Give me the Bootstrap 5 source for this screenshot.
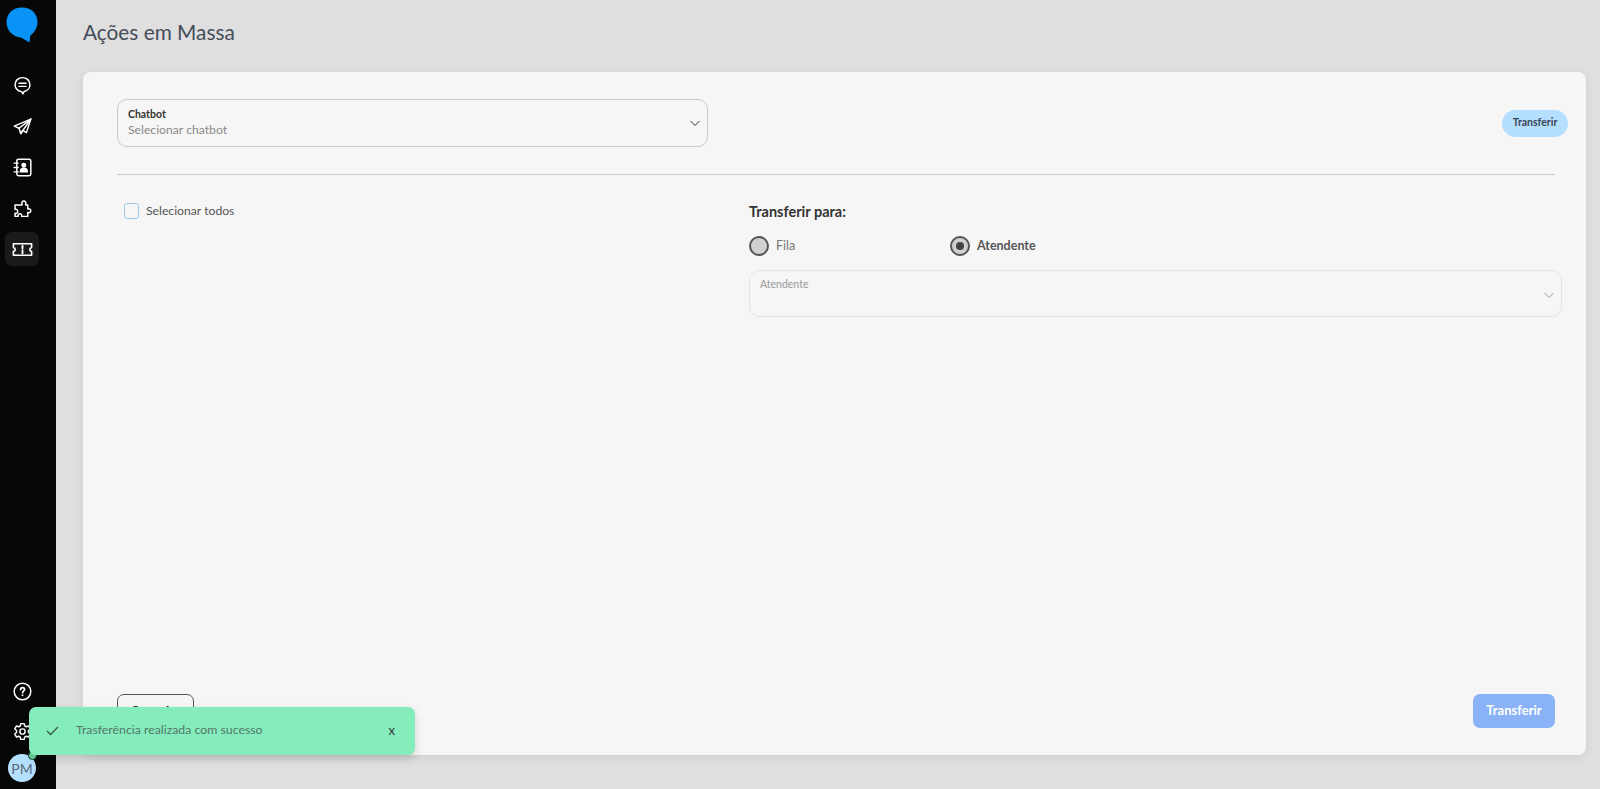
<!DOCTYPE html>
<html lang="pt-BR"><head><meta charset="utf-8"><title>Ações em Massa</title>
<link href="https://cdn.jsdelivr.net/npm/bootstrap@5.3.0/dist/css/bootstrap.min.css" rel="stylesheet">
<style>
html,body{height:100%;overflow:hidden}
body{font-family:"Lato","Noto Sans",sans-serif;background:#dfdfdf;color:#333}
.side-rail{width:56px;background:#070707;height:789px;padding:7px 12px 0 0;position:relative;z-index:1}
.rail-logo{width:32px;height:36px;margin-bottom:25px}
.rail-btn{width:34px;height:34px;margin-bottom:7px;border-radius:7px}
.rail-btn.on{background:#1a1a1a}
.rail-btn svg{width:21px;height:21px;fill:none;stroke:#fff;stroke-width:1.7;stroke-linejoin:round;stroke-linecap:round}
.rail-btn.on svg{width:23px;height:23px}
.rail-low{margin-top:auto;padding-bottom:7px}
.rail-low .rail-btn{margin-bottom:6px}
.avatar-pm{width:28px;height:28px;border-radius:50%;background:#b5dfff;color:#5a6a78;font-size:14px;position:relative;font-family:"Lato",sans-serif}
.avatar-dot{position:absolute;top:-3px;right:-1px;width:9px;height:9px;border-radius:50%;background:#6fd3a0;border:1.5px solid #0a3a28}
.work-area{padding:0 14px 34px 27px;height:789px}
.page-title{font-size:20.8px;font-weight:400;color:#454c59;line-height:28px;margin:18px 0 26px}
.main-panel{background:#f6f6f6;border-radius:8px;height:683px;box-shadow:0 2px 8px rgba(0,0,0,.08);padding:27px 31px 27px 34px}
.top-line{height:48px;margin-right:-13px}
.top-line .chat-select{width:591px}
.chat-select{border:1px solid #c9c9c9;border-radius:10px;height:48px;padding:7px 10px;position:relative}
.sel-label{font-size:10.5px;font-weight:700;color:#333;line-height:14px}
.sel-value{font-size:12.2px;color:#8a8a8a;line-height:18px}
.sel-chev{position:absolute;right:7px;top:18px;width:10px;height:10px;fill:none;stroke:#333;stroke-width:1}
.pill-btn{background:#b5dfff;border:0;border-radius:14px;width:66px;height:27px;font-size:10.5px;font-weight:700;color:#3a4454;padding:0}
.rule-line{border-top:1px solid #c9c9c9;margin:27px 0 0;height:0}
.body-split{margin-top:27px;height:471px}
.left-col{width:632px;padding:0 0 0 7px}
.fake-check{width:15px;height:16px;border:1px solid #9cc9ea;border-radius:3px;margin-right:7px}
.check-text{font-size:12.2px;color:#555}
.right-col{flex:1;margin-right:-7px}
.to-title{font-size:14.5px;font-weight:700;color:#333;line-height:20px;margin-bottom:14px}
.radio-row{height:20px;margin-bottom:14px}
.radio-item{width:201px;font-size:12.5px;color:#777}
.radio-item.sel{color:#555;font-weight:700}
.radio-ring{width:20px;height:20px;border-radius:50%;border:2px solid #555;background:#d0d0d0;margin-right:7px;display:flex;align-items:center;justify-content:center}
.radio-ring i{width:8px;height:8px;border-radius:50%;background:#444;display:block}
.att-select{border:1px solid #e3e3e3;border-radius:10px;height:47px;padding:6px 10px;position:relative}
.att-select .sel-label{font-weight:400;color:#999;font-size:10.5px}
.att-select .sel-chev{stroke:#999;top:19px;right:7px}
.foot-line{margin-top:43px}
.cancel-btn{width:77px;height:34px;border:1px solid #555;border-radius:7px;background:transparent;font-size:13px;font-weight:700;color:#222;padding:1px 0 0}
.go-btn{width:82px;height:34px;border:0;border-radius:7px;background:#8ab2f6;color:#fff;font-size:13px;font-weight:700;padding:0}
.toast-ok{position:absolute;left:29px;top:707px;width:386px;height:48px;background:#84edbb;border-radius:7px;box-shadow:0 4px 10px rgba(0,0,0,.15);color:#55766a;font-size:12.3px;z-index:5;padding:0 20px 2px 17px}
.toast-ok svg{width:13px;height:13px;fill:none;stroke:#3d5a4c;stroke-width:1.3;margin-right:17px}
.toast-x{font-size:13px;font-weight:400;color:#333;margin-top:2px}
</style></head>
<body>
<div class="d-flex position-relative">
 <nav class="side-rail d-flex flex-column align-items-center flex-shrink-0">
  <svg class="rail-logo" viewBox="0 0 32 36"><path d="M16 0.5C7 .5.5 6.500.5 15S7 30 15 30.500l8.500 5 .8-7C28 26 31.500 21 31.500 15 31.500 6.500 25 .5 16 .5Z" fill="#0a93f7"/></svg>
  <div class="rail-btn d-flex align-items-center justify-content-center"><svg viewBox="0 0 24 24"><path d="M12 3c-4.900 0-8.500 3.500-8.500 8s3.600 7.700 7.500 8l1.500 2.500 1.300-2.700c3.800-.7 6.700-3.900 6.700-7.800 0-4.500-3.600-8-8.500-8Z"/><path d="M8 9.500h8M8 13h8"/></svg></div>
  <div class="rail-btn d-flex align-items-center justify-content-center"><svg viewBox="0 0 24 24"><path d="M21.500 3.500 2.500 11.500l5.500 2.500 2 6 2.500-3.500 4 2.500Z"/><path d="M21.500 3.500 8 14M21.500 3.500 10 20"/></svg></div>
  <div class="rail-btn d-flex align-items-center justify-content-center"><svg viewBox="0 0 24 24"><rect x="5.500" y="2.500" width="16" height="19" rx="2"/><path d="M2.500 7h4.500M2.500 12h4.500M2.500 17h4.500"/><circle cx="13.500" cy="9.500" r="2" fill="#fff"/><path d="M9.500 17c0-5.500 8-5.500 8 0Z" fill="#fff"/></svg></div>
  <div class="rail-btn d-flex align-items-center justify-content-center"><svg viewBox="0 0 24 24"><path d="M9 7h2.500C10.500 4 12 2.500 13.500 2.500S16.500 4 15.500 7H18v4.500c2-.8 3.500.5 3.500 2s-1.500 3-3.500 2V20H11c.5-2-.5-3-2-3s-2.500 1-2 3H3.500v-3.500c2 .5 3-.7 3-2.200S5.500 11.500 3.500 12V7Z" transform="translate(0 1)"/></svg></div>
  <div class="rail-btn on d-flex align-items-center justify-content-center"><svg viewBox="0 0 24 24"><path d="M2.500 6h19v4c-2.500.3-2.500 3.700 0 4v4h-19v-4c2.500-.3 2.500-3.700 0-4Z"/><path d="M12 8v3M12 13v3" stroke-width="2"/></svg></div>
  <div class="rail-low mt-auto d-flex flex-column align-items-center">
   <div class="rail-btn d-flex align-items-center justify-content-center"><svg viewBox="0 0 24 24"><circle cx="12" cy="12" r="9.500"/><path d="M9.800 9.800c0-3 4.600-3 4.600-.2 0 1.700-2.300 1.800-2.300 3.700M12 16v.3" stroke-width="2"/></svg></div>
   <div class="rail-btn d-flex align-items-center justify-content-center"><svg viewBox="0 0 24 24"><circle cx="12" cy="12" r="3"/><path d="M10 3h4l.5 2.600 1.800 1 2.500-.9 2 3.400-2 1.700v2.400l2 1.700-2 3.400-2.500-.9-1.800 1L14 21h-4l-.5-2.600-1.800-1-2.500.9-2-3.400 2-1.700v-2.400l-2-1.700 2-3.400 2.500.9 1.800-1Z"/></svg></div>
   <div class="avatar-pm d-flex align-items-center justify-content-center">PM<span class="avatar-dot"></span></div>
  </div>
 </nav>
 <main class="work-area flex-grow-1">
  <h1 class="page-title">Ações em Massa</h1>
  <section class="main-panel d-flex flex-column">
   <div class="top-line d-flex align-items-center justify-content-between">
    <div class="chat-select"><div class="sel-label">Chatbot</div><div class="sel-value">Selecionar chatbot</div><svg class="sel-chev" viewBox="0 0 10 10"><path d="M.5 3 5 7.500 9.500 3"/></svg></div>
    <button class="pill-btn" type="button">Transferir</button>
   </div>
   <div class="rule-line"></div>
   <div class="body-split d-flex">
    <div class="left-col"><div class="d-flex align-items-center"><span class="fake-check"></span><span class="check-text">Selecionar todos</span></div></div>
    <div class="right-col">
     <div class="to-title">Transferir para:</div>
     <div class="radio-row d-flex">
      <div class="radio-item d-flex align-items-center"><span class="radio-ring"></span>Fila</div>
      <div class="radio-item sel d-flex align-items-center"><span class="radio-ring"><i></i></span>Atendente</div>
     </div>
     <div class="att-select"><div class="sel-label">Atendente</div><svg class="sel-chev" viewBox="0 0 10 10"><path d="M.5 3 5 7.500 9.500 3"/></svg></div>
    </div>
   </div>
   <div class="foot-line d-flex justify-content-between">
    <button class="cancel-btn" type="button">Cancelar</button>
    <button class="go-btn" type="button">Transferir</button>
   </div>
  </section>
 </main>
 <div class="toast-ok d-flex align-items-center">
  <svg viewBox="0 0 13 13"><path d="M1 7l3.500 3.500L12 3"/></svg>
  <span class="flex-grow-1">Trasferência realizada com sucesso</span>
  <span class="toast-x">x</span>
 </div>
</div>
</body></html>
